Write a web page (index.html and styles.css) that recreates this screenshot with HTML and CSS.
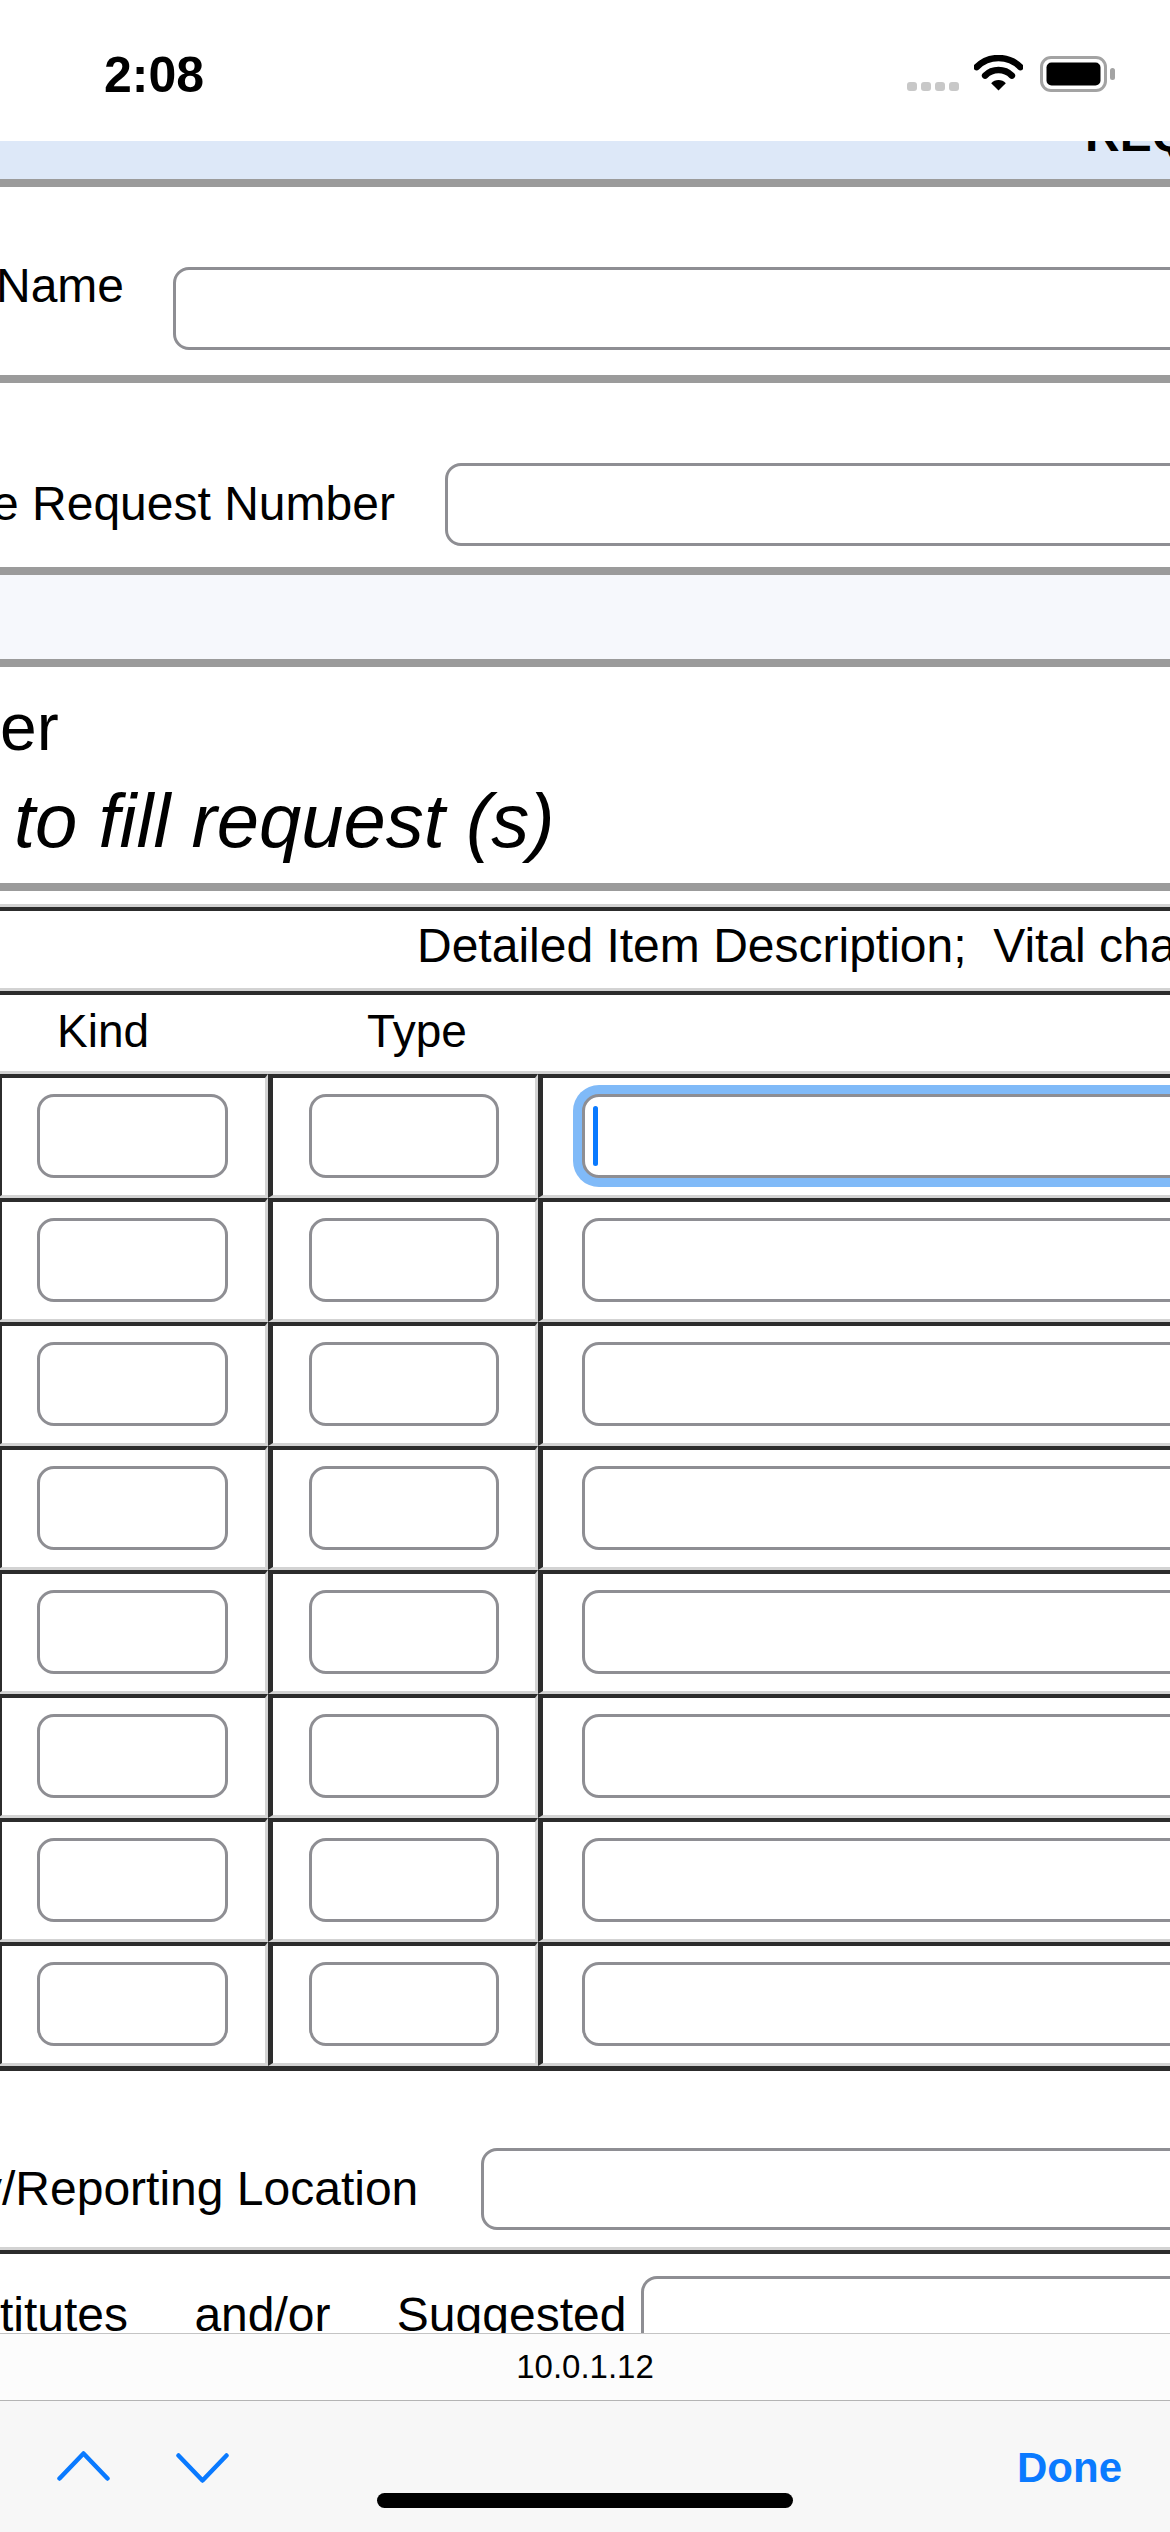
FILE: index.html
```html
<!DOCTYPE html>
<html lang="en">
<head>
<meta charset="utf-8">
<title>Request form</title>
<link rel="stylesheet" href="styles.css">
</head>
<body>
<div class="status">
  <span class="time">2:08</span>
  <div class="sys">
    <div class="dots"><i></i><i></i><i></i><i></i></div>
    <svg class="wifi" width="49" height="36" viewBox="0 0 49 36">
      <path d="M2.6 12.1 A31 31 0 0 1 46.4 12.1" fill="none" stroke="#000" stroke-width="6.5" stroke-linecap="round"/>
      <path d="M11.1 20.6 A19 19 0 0 1 37.9 20.6" fill="none" stroke="#000" stroke-width="6.5" stroke-linecap="round"/>
      <path d="M24.5 35.5 L17.2 28.2 A10 10 0 0 1 31.8 28.2 Z" fill="#000"/>
    </svg>
    <svg class="battery" width="76" height="36" viewBox="0 0 76 36">
      <rect x="1.5" y="1.5" width="64" height="33" rx="9.5" fill="none" stroke="#a3a3a3" stroke-width="3"/>
      <rect x="6.5" y="6.5" width="54" height="23" rx="5" fill="#000"/>
      <rect x="70" y="12" width="5" height="12" rx="2.5" fill="#a3a3a3"/>
    </svg>
  </div>
</div>

<main class="page">
  <div class="band"><span class="band-title">REQUEST</span></div>
  <div class="rule"></div>

  <div class="field field-name">
    <span class="label">Name</span>
    <div class="box wide"></div>
  </div>
  <div class="rule"></div>

  <div class="field field-req">
    <span class="label">e Request Number</span>
    <div class="box wide"></div>
  </div>
  <div class="rule"></div>

  <div class="band-light"></div>
  <div class="rule"></div>

  <div class="heading">
    <div class="h1">er</div>
    <div class="h2">to fill request (s)</div>
  </div>
  <div class="rule"></div>

  <div class="grid">
    <div class="hrow hrow-desc">Detailed Item Description;&nbsp; Vital characteristics</div>
    <div class="hrow hrow-cols"><span class="kind">Kind</span><span class="type">Type</span></div>

    <div class="row">
      <div class="cell c1"><div class="box small"></div></div>
      <div class="cell c2"><div class="box small"></div></div>
      <div class="cell c3"><div class="box wide focus"><span class="caret"></span></div></div>
    </div>
    <div class="row">
      <div class="cell c1"><div class="box small"></div></div>
      <div class="cell c2"><div class="box small"></div></div>
      <div class="cell c3"><div class="box wide"></div></div>
    </div>
    <div class="row">
      <div class="cell c1"><div class="box small"></div></div>
      <div class="cell c2"><div class="box small"></div></div>
      <div class="cell c3"><div class="box wide"></div></div>
    </div>
    <div class="row">
      <div class="cell c1"><div class="box small"></div></div>
      <div class="cell c2"><div class="box small"></div></div>
      <div class="cell c3"><div class="box wide"></div></div>
    </div>
    <div class="row">
      <div class="cell c1"><div class="box small"></div></div>
      <div class="cell c2"><div class="box small"></div></div>
      <div class="cell c3"><div class="box wide"></div></div>
    </div>
    <div class="row">
      <div class="cell c1"><div class="box small"></div></div>
      <div class="cell c2"><div class="box small"></div></div>
      <div class="cell c3"><div class="box wide"></div></div>
    </div>
    <div class="row">
      <div class="cell c1"><div class="box small"></div></div>
      <div class="cell c2"><div class="box small"></div></div>
      <div class="cell c3"><div class="box wide"></div></div>
    </div>
    <div class="row">
      <div class="cell c1"><div class="box small"></div></div>
      <div class="cell c2"><div class="box small"></div></div>
      <div class="cell c3"><div class="box wide"></div></div>
    </div>
  </div>

  <div class="field field-loc">
    <span class="label">y/Reporting Location</span>
    <div class="box wide"></div>
  </div>

  <div class="field field-sug">
    <span class="label words">titutes and/or Suggested</span>
    <div class="box wide"></div>
  </div>
</main>

<footer class="bar">
  <div class="addr">10.0.1.12</div>
  <div class="toolbar">
    <div class="tools">
      <svg class="chev chev-up" width="53" height="30" viewBox="0 0 53 30">
        <polyline points="2.5,27.5 26.5,2.5 50.5,27.5" fill="none" stroke="#0a7aff" stroke-width="4.5" stroke-linecap="round" stroke-linejoin="round"/>
      </svg>
      <svg class="chev chev-down" width="53" height="30" viewBox="0 0 53 30">
        <polyline points="2.5,2.5 26.5,27.5 50.5,2.5" fill="none" stroke="#0a7aff" stroke-width="4.5" stroke-linecap="round" stroke-linejoin="round"/>
      </svg>
      <span class="done">Done</span>
    </div>
    <div class="home"></div>
  </div>
</footer>
</body>
</html>
```

FILE: styles.css
```css
* { box-sizing: border-box; }

html, body { margin: 0; padding: 0; }

body {
  width: 1170px;
  height: 2532px;
  overflow: hidden;
  display: flex;
  flex-direction: column;
  font-family: "Liberation Sans", Arial, sans-serif;
  color: #000;
  background: #fff;
}

/* status bar */
.status {
  height: 141px;
  flex-shrink: 0;
  display: flex;
  align-items: flex-start;
  padding: 50px 54px 0 104px;
  background: #fff;
}
.time {
  font-weight: 700;
  font-size: 50px;
  line-height: 50px;
}
.sys {
  margin-left: auto;
  display: flex;
  align-items: flex-start;
}
.dots {
  display: flex;
  gap: 4px;
  margin-top: 32px;
}
.dots i {
  display: block;
  width: 10px;
  height: 9px;
  border-radius: 3px;
  background: #c8c8c8;
}
.wifi { margin: 5px 0 0 15px; display: block; }
.battery { margin: 6px 0 0 17px; display: block; }

/* page */
.page {
  flex: 1;
  min-height: 0;
  overflow: hidden;
}

.band {
  height: 38px;
  background: #dde8f8;
  overflow: hidden;
  padding-left: 1085px;
  white-space: nowrap;
}
.band-title {
  display: block;
  margin-top: -30px;
  font-weight: 700;
  font-size: 48px;
  line-height: 48px;
}

.rule {
  height: 8px;
  background: #9b9b9b;
}

.band-light {
  height: 84px;
  background: #f6f8fc;
}

.field {
  display: flex;
  align-items: flex-start;
  white-space: nowrap;
}
.label {
  flex-shrink: 0;
  font-size: 48px;
  line-height: 48px;
}

.box {
  flex-shrink: 0;
  height: 83px;
  border: 3px solid #8e8e93;
  border-radius: 16px;
  background: #fff;
}
.box.wide { width: 1100px; }

.field-name {
  height: 188px;
  padding-top: 80px;
}
.field-name .label { margin: -5px 0 0 -4px; }
.field-name .box { margin-left: 49px; }

.field-req {
  height: 184px;
  padding-top: 80px;
}
.field-req .label { margin: 17px 0 0 -8px; }
.field-req .box { margin-left: 50px; }

/* heading */
.heading {
  height: 216px;
  padding-top: 27px;
  white-space: nowrap;
}
.h1 {
  font-size: 66px;
  line-height: 66px;
}
.h2 {
  margin-top: 23px;
  padding-left: 14px;
  font-size: 76px;
  line-height: 76px;
  font-style: italic;
}

/* grid */
.grid {
  margin-top: 13px;
  border-top: 3px solid #d3d3d3;
  border-bottom: 5px solid #2c2c2c;
}
.hrow {
  border-top: 4px solid #2c2c2c;
  border-bottom: 3px solid #d3d3d3;
  white-space: nowrap;
  overflow: hidden;
}
.hrow-desc {
  height: 84px;
  padding: 11px 0 0 417px;
  font-size: 48px;
  line-height: 48px;
}
.hrow-cols {
  height: 83px;
  padding-top: 13px;
  display: flex;
  font-size: 46px;
  line-height: 46px;
}
.kind { margin-left: 57px; }
.type { margin-left: 218px; }

.row {
  display: flex;
  height: 124px;
}
.cell {
  flex-shrink: 0;
  border-top: 4px solid #2c2c2c;
  border-left: 5px solid #2c2c2c;
  border-bottom: 3px solid #d3d3d3;
  border-right: 3px solid #d3d3d3;
  padding-top: 16px;
}
.cell .box { height: 84px; border-radius: 17px; }
.c1 { width: 271px; margin-left: -3px; padding-left: 35px; }
.c1 .box { width: 191px; }
.c2 { width: 270px; padding-left: 36px; }
.c2 .box { width: 190px; }
.c3 { width: 900px; padding-left: 39px; }
.c3 .box { width: 800px; }

.box.focus {
  box-shadow: 0 0 0 9px #80baf8;
  display: flex;
  align-items: center;
  padding-left: 8px;
}
.caret {
  display: block;
  width: 5px;
  height: 60px;
  border-radius: 3px;
  background: #0a7aff;
}

.field-loc {
  height: 179px;
  padding-top: 77px;
  border-bottom: 3px solid #d3d3d3;
}
.field-loc .label { margin: 17px 0 0 -22px; }
.field-loc .box { margin-left: 63px; height: 82px; }

.field-sug {
  border-top: 4px solid #2c2c2c;
  padding-top: 22px;
  height: 200px;
}
.field-sug .label { margin-top: 15px; }
.words { word-spacing: 53px; }
.field-sug .box { margin-left: 15px; height: 82px; }

/* bottom bars */
.bar {
  flex-shrink: 0;
  height: 199px;
  display: flex;
  flex-direction: column;
}
.addr {
  height: 68px;
  border-top: 1px solid #c4c4c4;
  border-bottom: 1px solid #b4b4b4;
  background: #fcfcfc;
  text-align: center;
  padding-top: 16px;
  font-size: 33px;
  line-height: 33px;
}
.toolbar {
  flex: 1;
  background: #f7f7f7;
  padding-top: 46px;
  display: flex;
  flex-direction: column;
}
.tools {
  display: flex;
  align-items: flex-start;
  height: 42px;
  padding: 0 48px 0 57px;
}
.chev { display: block; }
.chev-up { margin-top: 4px; }
.chev-down { margin: 6px 0 0 66px; }
.done {
  margin-left: auto;
  color: #0a7aff;
  font-weight: 700;
  font-size: 42px;
  line-height: 42px;
}
.home {
  width: 416px;
  height: 15px;
  margin: 4px auto 0;
  border-radius: 8px;
  background: #000;
}
```
